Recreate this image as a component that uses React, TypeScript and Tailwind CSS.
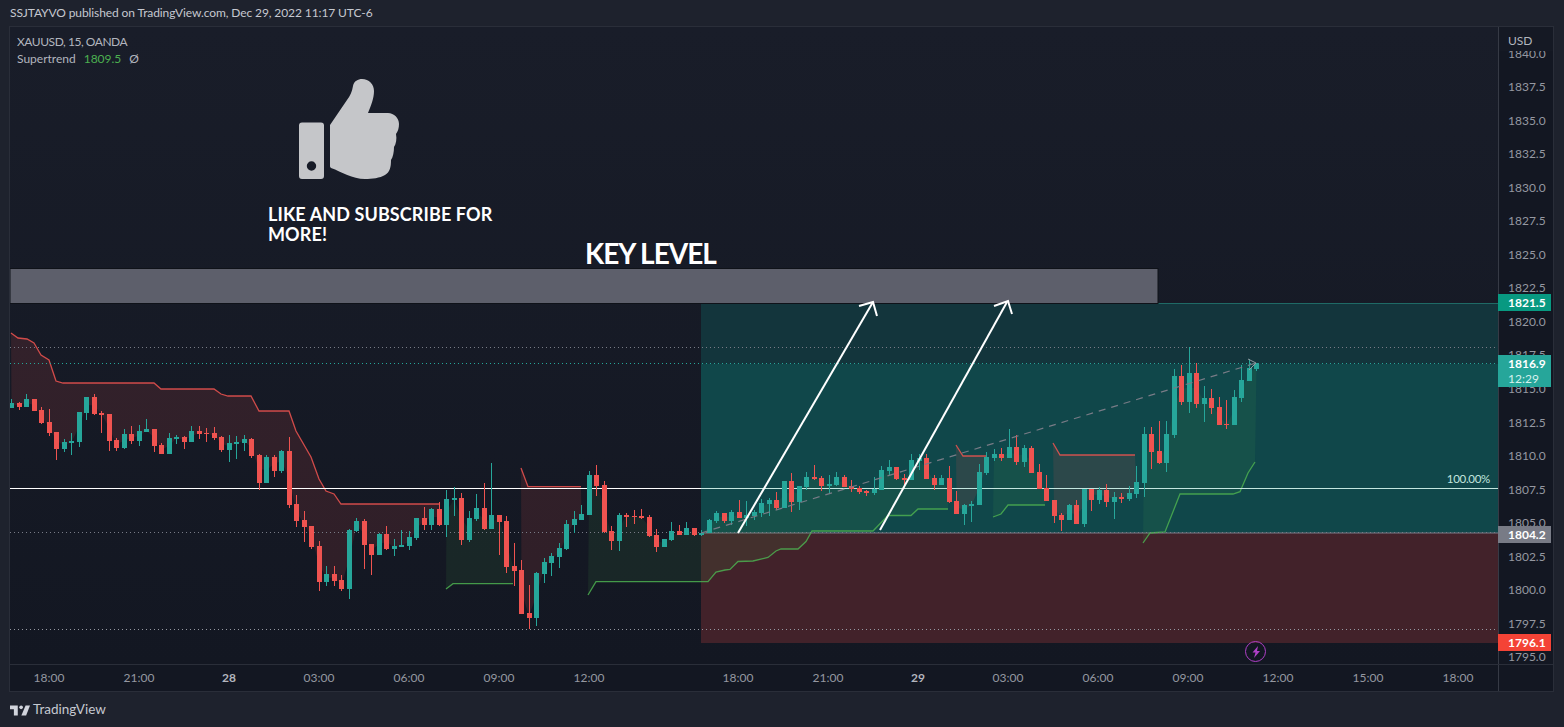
type Row = [number, number, number, number, number];

const GREEN = 1;
const RED = 0;

// candle rows: color, wick top, body top, body bottom, wick bottom (traced at 3x, y relative to base)
const blocks: { base: number; rows: Row[] }[] = [
  {
    base: 320,
    rows: [
      [1, 237, 249, 264, 264], [0, 246, 249, 261, 270], [1, 222, 237, 261, 261], [0, 237, 237, 273, 273],
      [0, 261, 270, 309, 312], [0, 267, 306, 339, 348], [0, 336, 336, 387, 420], [1, 357, 366, 387, 396],
      [1, 339, 363, 369, 405], [1, 276, 276, 366, 381], [1, 231, 231, 279, 300], [0, 222, 231, 282, 285],
      [0, 273, 279, 285, 339], [0, 282, 282, 363, 393], [0, 354, 360, 384, 393], [1, 327, 342, 384, 387],
      [0, 318, 342, 363, 372], [1, 315, 333, 363, 378], [1, 297, 327, 336, 336], [0, 327, 327, 378, 396],
      [0, 369, 375, 402, 402], [1, 339, 354, 402, 402], [1, 345, 351, 357, 372], [0, 348, 351, 366, 387],
      [1, 318, 333, 366, 366], [0, 318, 333, 342, 357], [0, 324, 339, 342, 366], [0, 321, 339, 354, 360],
      [0, 348, 351, 390, 396], [1, 345, 369, 390, 426], [1, 348, 366, 372, 417], [1, 345, 357, 369, 393],
      [0, 354, 357, 408, 414], [0, 402, 405, 489, 510], [1, 405, 411, 489, 489], [0, 405, 411, 453, 471],
      [1, 390, 393, 453, 459], [0, 351, 393, 555, 564], [0, 525, 552, 603, 621], [0, 573, 600, 621, 666],
      [0, 618, 618, 681, 687], [0, 663, 678, 786, 813], [1, 738, 762, 786, 798], [0, 738, 762, 783, 798],
      [0, 765, 780, 807, 813],
    ],
  },
  {
    base: 440,
    rows: [
      [1, 267, 270, 447, 477], [1, 234, 243, 273, 276], [0, 237, 243, 315, 387], [0, 312, 312, 345, 405],
      [1, 279, 282, 345, 345], [0, 258, 282, 327, 330], [1, 297, 318, 327, 348], [1, 270, 315, 321, 321],
      [1, 273, 291, 318, 330], [1, 234, 234, 294, 300], [0, 201, 234, 255, 270], [1, 204, 207, 255, 270],
      [0, 186, 207, 255, 258], [1, 150, 177, 255, 291], [1, 141, 174, 180, 228], [0, 159, 174, 300, 315],
      [1, 213, 234, 300, 306], [1, 162, 204, 237, 243], [0, 129, 204, 267, 270], [1, 69, 225, 267, 267],
      [0, 225, 225, 246, 345], [0, 228, 243, 381, 399], [0, 309, 378, 393, 438], [0, 360, 390, 522, 522],
      [0, 435, 519, 534, 567], [1, 396, 399, 534, 558], [1, 354, 366, 402, 429], [1, 339, 348, 369, 408],
      [1, 309, 324, 351, 384], [1, 240, 252, 327, 330], [1, 213, 237, 255, 279], [1, 195, 222, 240, 240],
      [1, 93, 105, 225, 225], [0, 75, 105, 138, 168], [0, 123, 135, 276, 279], [0, 258, 273, 303, 330],
      [1, 219, 225, 303, 333], [0, 219, 225, 231, 261], [0, 210, 228, 231, 252], [0, 207, 228, 234, 237],
      [0, 225, 231, 288, 291], [0, 267, 285, 321, 336], [1, 297, 297, 321, 321], [1, 246, 273, 300, 303],
      [0, 255, 273, 285, 285], [1, 246, 264, 285, 285], [0, 264, 264, 285, 288],
    ],
  },
  {
    base: 420,
    rows: [
      [1, 330, 339, 345, 348], [1, 297, 300, 339, 339], [1, 273, 279, 303, 309], [0, 279, 279, 303, 309],
      [1, 270, 276, 303, 315], [0, 240, 276, 294, 294], [1, 243, 285, 294, 318], [1, 270, 276, 288, 300],
      [1, 237, 249, 279, 291], [1, 234, 240, 252, 288], [0, 216, 240, 264, 270], [1, 183, 183, 264, 264],
      [0, 159, 183, 246, 276], [1, 198, 198, 246, 270], [1, 156, 171, 201, 210], [0, 135, 171, 177, 180],
      [0, 168, 174, 198, 213], [1, 165, 192, 198, 222], [1, 156, 171, 195, 198], [0, 165, 171, 201, 201],
      [0, 180, 198, 207, 216], [0, 198, 204, 216, 222], [0, 210, 213, 219, 228], [1, 171, 207, 219, 225],
      [1, 138, 150, 210, 210], [1, 120, 141, 153, 165], [0, 141, 141, 177, 180], [0, 162, 174, 180, 201],
      [1, 102, 120, 180, 180], [1, 102, 114, 123, 150], [0, 102, 114, 177, 177], [0, 165, 174, 195, 210],
      [1, 165, 174, 195, 195], [0, 138, 174, 246, 249], [0, 213, 243, 282, 282], [1, 252, 255, 282, 315],
      [1, 243, 252, 258, 306], [1, 132, 156, 255, 255],
    ],
  },
  {
    base: 340,
    rows: [
      [1, 336, 351, 399, 405], [1, 327, 342, 354, 363], [0, 324, 342, 354, 363], [1, 267, 321, 354, 354],
      [0, 285, 321, 366, 375], [1, 315, 324, 366, 381], [0, 318, 324, 399, 399], [0, 372, 396, 447, 447],
      [0, 405, 444, 483, 483], [0, 480, 480, 528, 549], [0, 519, 525, 540, 573], [1, 492, 495, 540, 540],
      [0, 480, 495, 552, 552], [1, 447, 447, 552, 561], [0, 447, 447, 480, 513], [1, 441, 450, 480, 492],
      [0, 432, 450, 486, 501], [1, 456, 471, 486, 537], [0, 459, 471, 477, 489], [1, 438, 459, 477, 483],
      [1, 378, 426, 462, 474], [1, 261, 282, 429, 471], [0, 261, 282, 336, 387], [0, 243, 333, 369, 372],
      [1, 243, 282, 369, 396], [1, 87, 108, 285, 294], [0, 75, 108, 186, 195], [1, 22, 99, 186, 219],
      [0, 69, 99, 192, 204], [1, 138, 174, 192, 246], [0, 147, 174, 204, 222], [0, 171, 201, 255, 255],
      [0, 180, 252, 255, 267], [1, 150, 171, 255, 255], [1, 75, 120, 174, 186], [1, 57, 84, 123, 123],
      [1, 70, 70, 87, 93],
    ],
  },
];

const candles = blocks.flatMap((b) =>
  b.rows.map(([color, wt, bt, bb, wb]) => ({
    color,
    wickTop: Math.round(b.base + wt / 3),
    bodyTop: Math.round(b.base + bt / 3),
    bodyBottom: Math.round(b.base + bb / 3),
    wickBottom: Math.round(b.base + wb / 3),
  }))
);

const barX = (i: number) => 11.5 + 7.5 * i;
const barMid = (i: number) => (candles[i].bodyTop + candles[i].bodyBottom) / 2;

type Seg = { color: number; line: [number, number][] };

// supertrend stretches
const supertrend: Seg[] = [
  {
    color: RED,
    line: [
      [11, 333], [18, 338], [27, 339], [34, 343], [41, 355], [49, 360], [56, 381], [63, 383], [154, 383],
      [161, 389], [214, 389], [221, 394], [228, 396], [251, 396], [259, 411], [289, 411], [296, 431],
      [311, 457], [319, 479], [326, 491], [334, 494], [341, 504], [439, 504],
    ],
  },
  { color: GREEN, line: [[446, 589], [453, 583.7], [513, 583.7]] },
  { color: RED, line: [[521, 468], [528, 486.7], [581, 486.7]] },
  {
    color: GREEN,
    line: [
      [588, 595], [596, 581.7], [708, 581.7], [716, 572], [725, 570], [730, 569.5], [738, 561.5], [753, 561],
      [768, 557.5], [776, 551], [781, 549], [798, 549], [806, 541.5], [812, 531], [873, 531], [888, 515.5],
      [911, 515.5], [918, 509], [948, 509],
    ],
  },
  { color: RED, line: [[956, 445], [963, 456], [986, 456]] },
  { color: GREEN, line: [[993, 517], [1001, 514], [1008, 505], [1045, 505]] },
  { color: RED, line: [[1053, 443], [1060, 455], [1135, 455]] },
  {
    color: GREEN,
    line: [
      [1143, 543], [1150, 533], [1165, 532], [1180, 494], [1233, 494], [1240, 491.7], [1248, 473], [1255, 462],
    ],
  },
];

const segFill = (seg: Seg) => {
  const first = Math.round((seg.line[0][0] - 11.5) / 7.5);
  const last = Math.round((seg.line[seg.line.length - 1][0] - 11.5) / 7.5);
  const mids: string[] = [];
  for (let i = last; i >= first && i < candles.length; i--) {
    mids.push(`${barX(i)},${barMid(i)}`);
  }
  return [...seg.line.map((p) => p.join(",")), ...mids].join(" ");
};

const prices = [
  "1840.0", "1837.5", "1835.0", "1832.5", "1830.0", "1827.5", "1825.0", "1822.5", "1820.0", "1817.5",
  "1815.0", "1812.5", "1810.0", "1807.5", "1805.0", "1802.5", "1800.0", "1797.5", "1795.0",
];

const timesBefore = [
  { t: "18:00" }, { t: "21:00" }, { t: "28", bold: true }, { t: "03:00" }, { t: "06:00" }, { t: "09:00" }, { t: "12:00" },
];
const timesAfter = [
  { t: "18:00" }, { t: "21:00" }, { t: "29", bold: true }, { t: "03:00" }, { t: "06:00" }, { t: "09:00" },
  { t: "12:00" }, { t: "15:00" }, { t: "18:00" },
];

function TimeLabel({ t, bold }: { t: string; bold?: boolean }) {
  return <div className={`w-[90px] shrink-0 text-center ${bold ? "font-bold text-[#b2b5be]" : ""}`}>{t}</div>;
}

function ChartDrawing() {
  return (
    <svg className="absolute left-0 top-0" width="1498" height="637" viewBox="0 27 1498 637">
      {/* long position */}
      <rect x="701" y="303" width="797" height="61" fill="#13353c" />
      <rect x="701" y="364" width="797" height="169" fill="#10474a" />
      <rect x="701" y="533" width="797" height="110" fill="#42222a" />
      <line x1="701" y1="533" x2="1498" y2="533" stroke="#787b86" />
      <line x1="701" y1="303.5" x2="1498" y2="303.5" stroke="#1f6a66" />
      {/* key level box */}
      <rect x="10" y="268.5" width="1148" height="35" fill="#5d5f6b" stroke="#0f1219" />

      {/* supertrend */}
      {supertrend.map((seg, i) => (
        <polygon
          key={i}
          points={segFill(seg)}
          fill={seg.color === GREEN ? "#4caf50" : "#ef5350"}
          fillOpacity={seg.color === GREEN ? 0.1 : 0.13}
        />
      ))}
      {supertrend.map((seg, i) => (
        <polyline
          key={i}
          points={seg.line.map((p) => p.join(",")).join(" ")}
          fill="none"
          stroke={seg.color === GREEN ? "#4caf50" : "#ef5350"}
          strokeOpacity="0.85"
          strokeWidth="1.3"
        />
      ))}

      {/* dotted levels */}
      <line x1="10" y1="347.5" x2="1498" y2="347.5" stroke="#787b86" strokeDasharray="1 3" />
      <line x1="10" y1="363.5" x2="1498" y2="363.5" stroke="#26a69a" strokeDasharray="1 3" />
      <line x1="10" y1="532.5" x2="1498" y2="532.5" stroke="#787b86" strokeDasharray="1 3" />
      <line x1="10" y1="629.5" x2="1498" y2="629.5" stroke="#9598a1" strokeDasharray="1 3" />

      {/* 100% line */}
      <line x1="10" y1="488.5" x2="701" y2="488.5" stroke="#ffffff" />
      <line x1="701" y1="488.5" x2="1498" y2="488.5" stroke="#c3e6df" />

      {/* candles */}
      {candles.map((c, i) => {
        const fill = c.color === GREEN ? "#26a69a" : "#ef5350";
        const x = Math.floor(barX(i));
        return (
          <g key={i} fill={fill}>
            <rect x={x} y={c.wickTop} width="1" height={c.wickBottom - c.wickTop} />
            <rect x={x - 2} y={c.bodyTop} width="5" height={Math.max(1, c.bodyBottom - c.bodyTop)} />
          </g>
        );
      })}

      {/* dashed forecast line */}
      <line x1="701" y1="533" x2="1256" y2="363" stroke="#787b86" strokeWidth="1.2" strokeDasharray="7 6" />
      <polyline points="1248,359 1256,363 1249,370" fill="none" stroke="#9598a1" />

      {/* white arrows */}
      <g fill="none" stroke="#ffffff" strokeWidth="2">
        <line x1="738" y1="533" x2="873" y2="302" />
        <polyline points="859,306 873,302 877,316" />
        <line x1="880" y1="530" x2="1007" y2="302" />
        <polyline points="994,306 1008,301 1012,314" />
      </g>
    </svg>
  );
}

function ThumbIcon() {
  return (
    <svg width="102" height="102" viewBox="298 78 102 102" className="block">
      <path
        fillRule="evenodd"
        fill="#c5c6c9"
        d="M302 122.500h19a3 3 0 0 1 3 3V176a3 3 0 0 1-3 3h-19a3 3 0 0 1-3-3v-50.500a3 3 0 0 1 3-3zM311.500 161.300a4.700 4.700 0 1 0 0 9.400 4.700 4.700 0 0 0 0-9.400z"
      />
      <path
        fill="#c5c6c9"
        d="M330 125 L347 100 C350 96 352 92 353 86 C354 81 358 79 362 79 C369 79 374 84 374 91 C374 98 371 106 368 113 L388 113 C394 113 399 118 399 124 C399 128 398 131 396 134 C397 139 396 144 394 147 C394 152 393 157 391 160 C391 167 390 172 385 175 C380 178 372 179 365 179 C352 179 342 172 331 168 C330.500 167.500 330 167 330 166 Z"
      />
    </svg>
  );
}

function TvLogo() {
  return (
    <svg width="20" height="12" viewBox="0 0 36 20" fill="#d1d4dc" className="block">
      <path d="M14 2H0v6.500h7V20h7V2z" />
      <circle cx="20" cy="5.200" r="3.300" />
      <path d="M29 20h-8.500L28 2h8l-7 18z" />
    </svg>
  );
}

export default function App() {
  return (
    <div className="flex h-[727px] w-[1564px] flex-col overflow-hidden bg-[#1e222d] font-['Lato',sans-serif] text-[#b2b5be]">
      {/* published header */}
      <div className="flex h-[26px] items-center pl-[10px] text-[12px] tracking-[-0.1px] text-[#c5c8d0]">
        SSJTAYVO published on TradingView.com, Dec 29, 2022 11:17 UTC-6
      </div>

      <div className="ml-[9px] mr-[10px] flex h-[666px] flex-col border border-[#2a2e39] bg-[#131722]">
        <div className="flex h-[637px]">
          {/* chart pane */}
          <div className="relative w-[1488px] overflow-hidden bg-gradient-to-b from-[#191d29] to-[#131722]">
            <div className="absolute -left-[10px] top-0">
              <ChartDrawing />
            </div>

            <div className="absolute left-[7px] top-[6px] text-[12px] leading-[17px]">
              <div className="tracking-[-0.45px]">XAUUSD, 15, OANDA</div>
              <div className="flex gap-[8px]">
                <span>Supertrend</span>
                <span className="text-[#4caf50]">1809.5</span>
                <span>Ø</span>
              </div>
            </div>

            <div className="absolute left-[288px] top-[51px]">
              <ThumbIcon />
            </div>
            <div className="absolute left-[258px] top-[177px] w-[240px] text-[18px] font-bold leading-[20px] tracking-[0.1px] text-white">
              LIKE AND SUBSCRIBE FOR MORE!
            </div>
            <div className="absolute left-[575px] top-[208px] text-[28px] font-bold leading-[36px] tracking-[-1px] text-white">
              KEY LEVEL
            </div>
            <div className="absolute right-[8px] top-[443px] text-[11.500px] tracking-[-0.3px] text-[#c3e6df]">100.00%</div>

            {/* alert bolt */}
            <div className="absolute left-[1235px] top-[614px] flex h-[21px] w-[21px] items-center justify-center rounded-full border-[1.5px] border-[#b040c8]">
              <svg width="10" height="12" viewBox="0 0 10 12" fill="#b040c8">
                <path d="M7 0 1.500 6.500h3L3 12l6-7H6L7 0z" />
              </svg>
            </div>
          </div>

          {/* price axis */}
          <div className="relative w-[55px] border-l border-[#363a45] text-[12px]">
            <div className="flex flex-col pl-[9px] pt-[17.500px] text-[#9598a1]">
              {prices.map((p) => (
                <div key={p} className="h-[33.550px] leading-[17px]">
                  {p}
                </div>
              ))}
            </div>
            <div className="absolute left-0 top-0 h-[24px] w-full bg-[#151924] pl-[9px] pt-[5px] text-[#b2b5be]">USD</div>

            <div className="absolute -left-px top-[267px] w-[53px] bg-[#089981] pl-[10px] font-bold leading-[17px] text-white">1821.5</div>
            <div className="absolute -left-px top-[328px] w-[53px] bg-[#26a69a] py-[1px] pl-[10px] leading-[15px]">
              <div className="font-bold text-white">1816.9</div>
              <div className="text-[#d6f1ed]">12:29</div>
            </div>
            <div className="absolute -left-px top-[499px] w-[53px] bg-[#787b86] pl-[10px] font-bold leading-[17px] text-white">1804.2</div>
            <div className="absolute -left-px top-[607px] w-[53px] bg-[#f44336] pl-[10px] font-bold leading-[17px] text-white">1796.1</div>
          </div>
        </div>

        {/* time axis */}
        <div className="flex h-[27px] border-t border-[#2a2e39]">
          <div className="flex w-[1488px] items-center overflow-hidden text-[12px] text-[#9598a1]">
            <div className="-ml-[6px] flex">
              {timesBefore.map((item, i) => (
                <TimeLabel key={i} t={item.t} bold={item.bold} />
              ))}
              <div className="w-[59px] shrink-0" />
              {timesAfter.map((item, i) => (
                <TimeLabel key={i} t={item.t} bold={item.bold} />
              ))}
            </div>
          </div>
          <div className="w-[55px] border-l border-[#363a45]" />
        </div>
      </div>

      {/* footer */}
      <div className="flex flex-1 items-center gap-[3px] pl-[10px] text-[13.500px] text-[#c5c8d0]">
        <TvLogo />
        <span>TradingView</span>
      </div>
    </div>
  );
}
